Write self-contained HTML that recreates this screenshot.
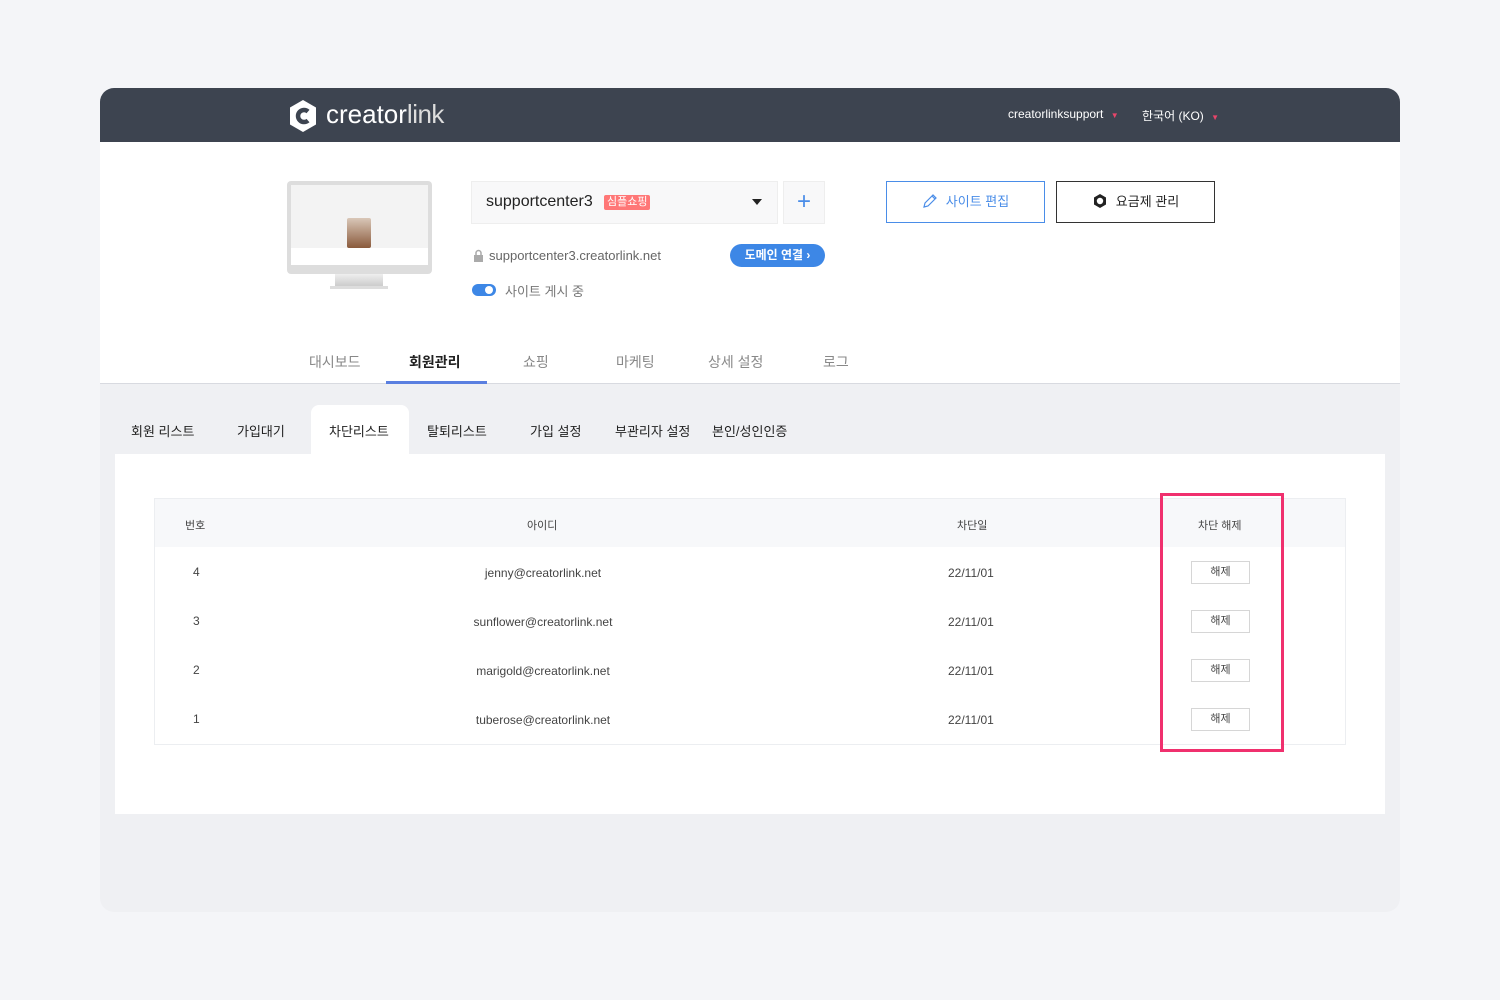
<!DOCTYPE html>
<html><head><meta charset="utf-8"><style>
*{margin:0;padding:0;box-sizing:border-box}
body{width:1500px;height:1000px;background:#f4f5f8;font-family:"Liberation Sans","Noto Sans CJK KR",sans-serif;position:relative;overflow:hidden;color:#333}
.a{position:absolute}
.wrap{left:100px;top:88px;width:1300px;height:824px;border-radius:14px;overflow:hidden;background:#eff0f3}
.hdr{left:0;top:0;width:1300px;height:54px;background:#3d4450}
.white{left:0;top:54px;width:1300px;height:242px;background:#fff;border-bottom:1px solid #d8dae0}
.t{white-space:nowrap}
.c{text-align:center}
.cell{font-size:12px;color:#444}
.btn{width:59px;height:23px;border:1px solid #d6d6d6;background:#fff;font-size:11px;color:#444;text-align:center;line-height:21px;left:1191px}
</style></head><body>
<div class="a wrap">
 <div class="a hdr"></div>
 <div class="a white"></div>
</div>
<svg class="a" style="left:288px;top:99px" width="30" height="34" viewBox="0 0 30 34"><polygon points="15,1 28,8.5 28,25.5 15,33 2,25.5 2,8.5" fill="#fff"/><path d="M20 12.5 A6 6 0 1 0 20 21.5" stroke="#3d4450" stroke-width="4.5" fill="none"/></svg>
<div class="a t" style="left:326px;top:99px;font-size:26px;color:#fff">creator<span style="font-weight:300;color:#ddd;letter-spacing:-0.5px">link</span></div>
<div class="a t" style="left:1008px;top:107px;font-size:12px;color:#fff">creatorlinksupport <span style="color:#e8456a;font-size:8px;margin-left:4px">▼</span></div>
<div class="a t" style="left:1142px;top:107px;font-size:12px;color:#fff">한국어 (KO) <span style="color:#e8456a;font-size:8px;margin-left:4px">▼</span></div>
<div class="a" style="left:287px;top:181px;width:145px;height:93px;background:#ddd;border-radius:4px"></div>
<div class="a" style="left:291px;top:185px;width:137px;height:80px;background:#f3f3f3"></div>
<div class="a" style="left:291px;top:248px;width:137px;height:17px;background:#fff"></div>
<div class="a" style="left:347px;top:218px;width:24px;height:30px;background:linear-gradient(#d9c7b8,#8a5a3c);border-radius:2px"></div>
<div class="a" style="left:335px;top:274px;width:48px;height:12px;background:linear-gradient(#eee,#ccc)"></div>
<div class="a" style="left:330px;top:286px;width:58px;height:3px;background:#ddd"></div>
<div class="a" style="left:471px;top:181px;width:307px;height:43px;background:#f8f8f9;border:1px solid #eee"></div>
<div class="a t" style="left:486px;top:193px;font-size:16px;color:#222">supportcenter3</div>
<div class="a t" style="left:604px;top:195px;background:#f77;color:#fff;font-size:11px;padding:0 3px;border-radius:2px;line-height:15px">심플쇼핑</div>
<div class="a" style="left:752px;top:199px;width:0;height:0;border-left:5px solid transparent;border-right:5px solid transparent;border-top:6px solid #222"></div>
<div class="a" style="left:783px;top:181px;width:42px;height:43px;background:#f8f8f9;border:1px solid #eee;color:#4a8de8;font-size:24px;text-align:center;line-height:40px;font-weight:300">+</div>
<svg class="a" style="left:473px;top:249px" width="11" height="14"><rect x="1" y="6" width="9" height="7" fill="#aaa"/><path d="M3 6V4a2.5 2.5 0 0 1 5 0v2" stroke="#aaa" stroke-width="1.5" fill="none"/></svg>
<div class="a t" style="left:489px;top:248px;font-size:13px;color:#666">supportcenter3.creatorlink.net</div>
<div class="a t" style="left:730px;top:244px;width:95px;height:23px;border-radius:12px;background:#3d87e6;color:#fff;font-size:12px;font-weight:bold;line-height:23px;text-align:center">도메인 연결 ›</div>
<div class="a" style="left:472px;top:284px;width:24px;height:12px;border-radius:6px;background:#3d87e6"></div>
<div class="a" style="left:485px;top:286px;width:8px;height:8px;border-radius:50%;background:#fff"></div>
<div class="a t" style="left:505px;top:281px;font-size:13px;color:#777">사이트 게시 중</div>
<div class="a t c" style="left:886px;top:181px;width:159px;height:42px;border:1px solid #4a8de8;color:#4a8de8;font-size:13px;line-height:40px"><svg width="16" height="16" viewBox="0 0 16 16" style="vertical-align:-3px;margin-right:8px"><path d="M2 14l1-4 8-8 3 3-8 8z M10 3l3 3" stroke="#4a8de8" stroke-width="1.2" fill="none"/></svg>사이트 편집</div>
<div class="a t c" style="left:1056px;top:181px;width:159px;height:42px;border:1px solid #333;color:#222;font-size:13px;line-height:40px"><svg width="16" height="16" viewBox="0 0 16 16" style="vertical-align:-3px;margin-right:8px"><polygon points="8,1 14,4.5 14,11.5 8,15 2,11.5 2,4.5" fill="#222"/><circle cx="8" cy="8" r="3.2" fill="#fff"/></svg>요금제 관리</div>
<div class="a t" style="left:309px;top:352px;font-size:14px;color:#888">대시보드</div>
<div class="a t" style="left:409px;top:352px;font-size:14px;color:#222;font-weight:600">회원관리</div>
<div class="a" style="left:386px;top:381px;width:101px;height:3px;background:#5a7fe0"></div>
<div class="a t" style="left:523px;top:352px;font-size:14px;color:#888">쇼핑</div>
<div class="a t" style="left:616px;top:352px;font-size:14px;color:#888">마케팅</div>
<div class="a t" style="left:708px;top:352px;font-size:14px;color:#888">상세 설정</div>
<div class="a t" style="left:823px;top:352px;font-size:14px;color:#888">로그</div>
<div class="a" style="left:311px;top:405px;width:98px;height:50px;background:#fff;border-radius:8px 8px 0 0"></div>
<div class="a t" style="left:131px;top:421px;font-size:13px;color:#222">회원 리스트</div>
<div class="a t" style="left:237px;top:421px;font-size:13px;color:#222">가입대기</div>
<div class="a t" style="left:329px;top:421px;font-size:13px;color:#222">차단리스트</div>
<div class="a t" style="left:427px;top:421px;font-size:13px;color:#222">탈퇴리스트</div>
<div class="a t" style="left:530px;top:421px;font-size:13px;color:#222">가입 설정</div>
<div class="a t" style="left:615px;top:421px;font-size:13px;color:#222">부관리자 설정</div>
<div class="a t" style="left:712px;top:421px;font-size:13px;color:#222">본인/성인인증</div>
<div class="a" style="left:115px;top:454px;width:1270px;height:360px;background:#fff"></div>
<div class="a" style="left:154px;top:498px;width:1192px;height:247px;border:1px solid #eceef1"></div>
<div class="a" style="left:155px;top:499px;width:1190px;height:48px;background:#f7f8fa"></div>
<div class="a t cell" style="left:185px;top:517px;font-size:11px">번호</div>
<div class="a t cell" style="left:527px;top:517px;font-size:11px">아이디</div>
<div class="a t cell" style="left:957px;top:517px;font-size:11px">차단일</div>
<div class="a t cell" style="left:1198px;top:517px;font-size:11px">차단 해제</div>
<div class="a t cell" style="left:193px;top:565px">4</div>
<div class="a t cell c" style="left:393px;top:566px;width:300px">jenny@creatorlink.net</div>
<div class="a t cell" style="left:948px;top:566px">22/11/01</div>
<div class="a btn" style="top:561px">해제</div>
<div class="a t cell" style="left:193px;top:614px">3</div>
<div class="a t cell c" style="left:393px;top:615px;width:300px">sunflower@creatorlink.net</div>
<div class="a t cell" style="left:948px;top:615px">22/11/01</div>
<div class="a btn" style="top:610px">해제</div>
<div class="a t cell" style="left:193px;top:663px">2</div>
<div class="a t cell c" style="left:393px;top:664px;width:300px">marigold@creatorlink.net</div>
<div class="a t cell" style="left:948px;top:664px">22/11/01</div>
<div class="a btn" style="top:659px">해제</div>
<div class="a t cell" style="left:193px;top:712px">1</div>
<div class="a t cell c" style="left:393px;top:713px;width:300px">tuberose@creatorlink.net</div>
<div class="a t cell" style="left:948px;top:713px">22/11/01</div>
<div class="a btn" style="top:708px">해제</div>
<div class="a" style="left:1160px;top:493px;width:124px;height:259px;border:3px solid #f0306e"></div>
</body></html>
